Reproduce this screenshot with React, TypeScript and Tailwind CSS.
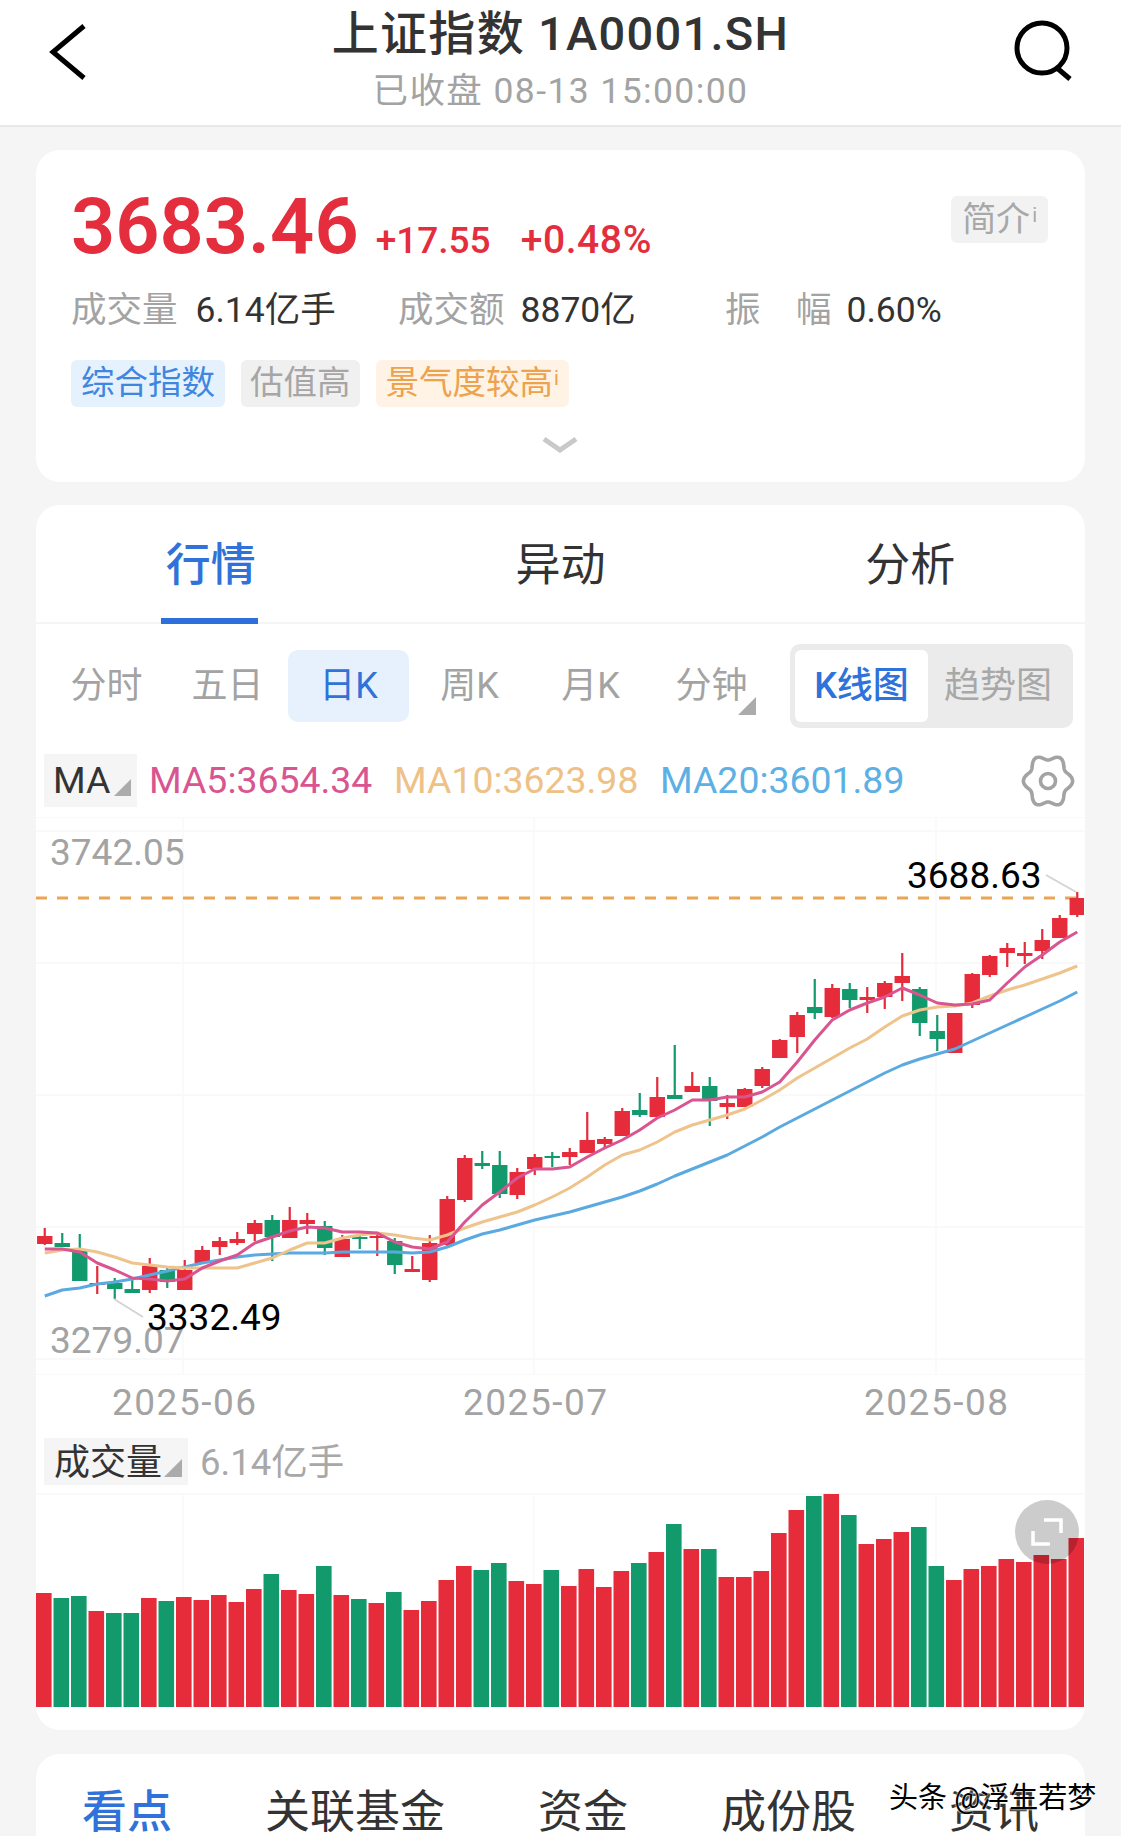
const UP = "#e62b3b";
const DOWN = "#129a6d";

// high, body top, body bottom, low (page px), 1 = red
const candles: [number, number, number, number, number][] = [
  [1228, 1236, 1244, 1245, 1], [1233, 1243, 1247, 1247, 0], [1234, 1250, 1281, 1281, 0], [1266, 1283, 1285, 1294, 1],
  [1278, 1283, 1289, 1299, 0], [1280, 1289, 1293, 1293, 0], [1258, 1266, 1290, 1293, 1], [1268, 1270, 1282, 1288, 0],
  [1260, 1270, 1290, 1290, 1], [1246, 1250, 1263, 1263, 1], [1237, 1241, 1247, 1255, 1], [1232, 1239, 1243, 1245, 1],
  [1220, 1223, 1234, 1241, 1], [1215, 1220, 1237, 1261, 0], [1207, 1220, 1238, 1238, 1], [1213, 1220, 1224, 1234, 1],
  [1221, 1226, 1248, 1255, 0], [1235, 1239, 1257, 1257, 1], [1235, 1237, 1239, 1249, 0], [1233, 1236, 1237, 1256, 1],
  [1238, 1241, 1265, 1274, 0], [1256, 1269, 1272, 1272, 1], [1235, 1243, 1280, 1282, 1], [1196, 1199, 1245, 1247, 1],
  [1155, 1158, 1200, 1202, 1], [1151, 1163, 1166, 1169, 0], [1151, 1165, 1194, 1198, 0], [1168, 1172, 1195, 1199, 1],
  [1154, 1157, 1169, 1175, 1], [1152, 1156, 1158, 1167, 0], [1148, 1152, 1157, 1165, 1], [1112, 1140, 1153, 1153, 1],
  [1137, 1139, 1144, 1148, 1], [1108, 1111, 1136, 1136, 1], [1093, 1110, 1115, 1117, 0], [1077, 1097, 1117, 1117, 1],
  [1045, 1095, 1099, 1099, 0], [1072, 1086, 1092, 1092, 1], [1077, 1086, 1101, 1126, 0], [1095, 1103, 1107, 1119, 1],
  [1088, 1089, 1107, 1107, 1], [1067, 1069, 1086, 1088, 1], [1039, 1040, 1058, 1058, 1], [1012, 1015, 1037, 1053, 1],
  [979, 1007, 1013, 1019, 0], [984, 988, 1017, 1018, 1], [983, 989, 1000, 1008, 0], [987, 997, 1000, 1013, 1],
  [981, 983, 997, 1009, 1], [953, 976, 983, 1001, 1], [987, 989, 1023, 1036, 0], [1015, 1031, 1039, 1051, 0],
  [1013, 1013, 1053, 1053, 1], [973, 974, 1005, 1008, 1], [955, 956, 975, 977, 1], [943, 948, 953, 967, 1],
  [942, 953, 956, 964, 1], [929, 940, 951, 959, 1], [915, 918, 938, 938, 1], [892, 898, 915, 917, 1],
];

const ma5 = [
  1249, 1249, 1252, 1263, 1270, 1278, 1279, 1281, 1279, 1268, 1261, 1255, 1243, 1237, 1231, 1227, 1228, 1232, 1232, 1233,
  1242, 1247, 1249, 1242, 1222, 1205, 1192, 1178, 1169, 1169, 1167, 1157, 1148, 1140, 1130, 1118, 1110, 1100, 1100, 1097,
  1097, 1092, 1082, 1062, 1040, 1020, 1010, 1003, 997, 988, 995, 1003, 1005, 1004, 1000, 983, 967, 955, 942, 932,
];
const ma10 = [
  1253, 1250, 1249, 1252, 1257, 1263, 1265, 1267, 1268, 1268, 1268, 1268, 1263, 1258, 1250, 1243, 1243, 1238, 1235, 1233,
  1235, 1238, 1240, 1235, 1228, 1222, 1217, 1212, 1205, 1197, 1188, 1177, 1165, 1155, 1150, 1142, 1132, 1125, 1120, 1115,
  1109, 1100, 1090, 1078, 1068, 1058, 1048, 1039, 1027, 1016, 1010, 1007, 1006, 1003, 996, 990, 985, 979, 973, 966,
];
const ma20 = [
  1296, 1290, 1288, 1284, 1282, 1279, 1275, 1271, 1267, 1263, 1260, 1257, 1255, 1254, 1253, 1253, 1253, 1252, 1252, 1252,
  1252, 1253, 1252, 1247, 1240, 1234, 1230, 1225, 1220, 1216, 1212, 1207, 1202, 1197, 1191, 1184, 1176, 1169, 1162, 1155,
  1146, 1137, 1127, 1118, 1109, 1100, 1091, 1082, 1073, 1065, 1059, 1054, 1049, 1041, 1033, 1025, 1017, 1009, 1001, 992,
];

// page y of each volume bar's top, 1 = red
const volumes: [number, number][] = [
  [1593, 1], [1598, 0], [1596, 0], [1611, 1], [1613, 0], [1613, 0], [1598, 1], [1601, 0], [1597, 1], [1600, 1],
  [1595, 1], [1602, 1], [1589, 1], [1574, 0], [1590, 1], [1594, 1], [1566, 0], [1595, 1], [1599, 0], [1603, 1],
  [1592, 0], [1610, 1], [1601, 1], [1580, 1], [1566, 1], [1570, 0], [1563, 0], [1581, 1], [1584, 1], [1570, 0],
  [1586, 1], [1569, 1], [1587, 1], [1571, 1], [1563, 0], [1552, 1], [1524, 0], [1549, 1], [1549, 0], [1577, 1],
  [1577, 1], [1571, 1], [1533, 1], [1510, 1], [1496, 0], [1494, 1], [1515, 0], [1544, 1], [1539, 1], [1532, 1],
  [1527, 0], [1566, 0], [1580, 1], [1569, 1], [1566, 1], [1559, 1], [1562, 1], [1555, 1], [1559, 1], [1538, 1],
];

const slotX = (i: number) => 44.75 + 17.5 * i;
const linePoints = (ys: number[]) => ys.map((y, i) => `${slotX(i)},${y}`).join(" ");

const gearPoints = Array.from({ length: 120 }, (_, i) => {
  const a = (i / 120) * Math.PI * 2;
  const r = 22 + 2.6 * Math.cos(6 * a);
  return `${(27 + r * Math.cos(a)).toFixed(2)},${(27 + 1.08 * r * Math.sin(a)).toFixed(2)}`;
}).join(" ");

function Corner({ className }: { className: string }) {
  return (
    <svg viewBox="0 0 18 18" className={className}>
      <polygon points="18,0 18,18 0,18" fill="#ababab" />
    </svg>
  );
}

function Header() {
  return (
    <header className="h-[127px] bg-white border-b-2 border-[#e8e8e8] flex items-start justify-between">
      <div className="w-[110px] pt-[24px] pl-[48px]">
        <svg viewBox="0 0 40 56" className="w-[40px] h-[56px]" fill="none" stroke="#000" strokeWidth="5">
          <path d="M36 2 L5 28 L36 54" />
        </svg>
      </div>
      <div className="flex flex-col items-center">
        <div className="mt-[9px] text-[47px] leading-[50px] font-medium tracking-[1.3px] text-[#333]">上证指数 1A0001.SH</div>
        <div className="mt-[12px] text-[35.5px] leading-[40px] tracking-[1.4px] text-[#a3a3a3]">已收盘 08-13 15:00:00</div>
      </div>
      <div className="w-[110px] pt-[20px] pl-[2px]">
        <svg viewBox="0 0 60 62" className="w-[60px] h-[62px]" fill="none" stroke="#000" strokeWidth="5">
          <circle cx="29" cy="28" r="25" />
          <path d="M44 48 L57 59" />
        </svg>
      </div>
    </header>
  );
}

function QuoteCard() {
  return (
    <section className="mx-[36px] mt-[23px] h-[332px] rounded-[24px] bg-white pl-[35px] pr-[37px] pt-[46px] flex flex-col">
      <div className="flex justify-between items-start h-[60px]">
        <div className="flex items-baseline font-medium text-[#e42d3d]">
          <span className="text-[77.5px] leading-[62px] font-semibold">3683.46</span>
          <span className="ml-[17px] text-[37px] leading-[40px]">+17.55</span>
          <span className="ml-[30px] text-[39px] leading-[40px] tracking-[0.6px]">+0.48%</span>
        </div>
        <span className="h-[47px] px-[11px] rounded-[6px] bg-[#f2f2f2] text-[34px] leading-[47px] text-[#a8a8a8]">
          简介<sup className="text-[20px] -top-[9px] ml-[2px]">i</sup>
        </span>
      </div>
      <div className="mt-[32px] grid grid-cols-[327px_327px_auto] text-[35.5px] leading-[44px] text-[#a3a3a3]">
        <div className="flex gap-[18px]">
          <span>成交量</span>
          <span className="text-[#333]">6.14亿手</span>
        </div>
        <div className="flex gap-[16px]">
          <span>成交额</span>
          <span className="text-[#333]">8870亿</span>
        </div>
        <div className="flex">
          <span className="w-[71px]">振</span>
          <span>幅</span>
          <span className="ml-[15px] text-[#333]">0.60%</span>
        </div>
      </div>
      <div className="mt-[28px] flex gap-[16px] text-[33.5px] leading-[46px]">
        <span className="h-[47px] px-[10px] rounded-[6px] bg-[#e5f1fd] text-[#3f86e0]">综合指数</span>
        <span className="h-[47px] px-[9px] rounded-[6px] bg-[#f0f0f0] text-[#a6a6a6]">估值高</span>
        <span className="h-[47px] px-[10px] rounded-[6px] bg-[#fff3e6] text-[#eda24e]">
          景气度较高<sup className="text-[20px] -top-[9px] ml-[1px]">i</sup>
        </span>
      </div>
      <div className="mt-[29px] flex justify-center">
        <svg viewBox="0 0 36 17" className="w-[36px] h-[17px]" fill="none" stroke="#c9c9c9" strokeWidth="5">
          <path d="M2 3 L18 14 L34 3" />
        </svg>
      </div>
    </section>
  );
}

function KLineChart() {
  return (
    <div className="relative h-[558px] mt-[10px] overflow-hidden">
      <svg viewBox="36 817 1048 558" className="w-[1048px] h-[558px]">
        {[817, 831, 963, 1095, 1227, 1359, 1375].map((y) => (
          <line key={y} x1="36" x2="1084" y1={y} y2={y} stroke="#f7f7f7" strokeWidth="1.5" />
        ))}
        {[183, 534, 936].map((x) => (
          <line key={x} x1={x} x2={x} y1="817" y2="1375" stroke="#f9f9f9" strokeWidth="1.5" />
        ))}
        <line x1="36" x2="1084" y1="898" y2="898" stroke="#e9a552" strokeWidth="3" strokeDasharray="11 10" />
        {candles.map(([high, top, bottom, low, up], i) => {
          const color = up ? UP : DOWN;
          return (
            <g key={i} fill={color}>
              <rect x={slotX(i) - 1.1} y={high} width="2.2" height={low - high} />
              <rect x={slotX(i) - 7.7} y={top} width="15.4" height={Math.max(bottom - top, 2)} />
            </g>
          );
        })}
        <polyline points={linePoints(ma20)} fill="none" stroke="#5ba9e1" strokeWidth="3" strokeLinejoin="round" />
        <polyline points={linePoints(ma10)} fill="none" stroke="#eec48c" strokeWidth="3" strokeLinejoin="round" />
        <polyline points={linePoints(ma5)} fill="none" stroke="#d95590" strokeWidth="3" strokeLinejoin="round" />
        <line x1="114" y1="1299" x2="143" y2="1317" stroke="#d4d4d4" strokeWidth="2" />
        <line x1="1046" y1="875" x2="1076" y2="892" stroke="#d4d4d4" strokeWidth="2" />
      </svg>
      <span className="absolute left-[14px] top-[18px] text-[37px] leading-[36px] text-[#a3a3a3]">3742.05</span>
      <span className="absolute left-[14px] top-[506px] text-[37px] leading-[36px] text-[#a3a3a3]">3279.07</span>
      <span className="absolute left-[111px] top-[483px] text-[37px] leading-[36px] text-black">3332.49</span>
      <span className="absolute left-[871px] top-[41px] text-[37px] leading-[36px] text-black">3688.63</span>
    </div>
  );
}

function VolumeChart() {
  return (
    <div className="relative mt-[8px] h-[214px]">
      <svg viewBox="36 1493 1048 214" className="w-[1048px] h-[214px]">
        <line x1="36" x2="1084" y1="1494" y2="1494" stroke="#f7f7f7" strokeWidth="1.5" />
        {[183, 534, 936].map((x) => (
          <line key={x} x1={x} x2={x} y1="1493" y2="1707" stroke="#f9f9f9" strokeWidth="1.5" />
        ))}
        {volumes.map(([top, up], i) => (
          <rect key={i} x={36 + 17.5 * i} y={top} width="15.6" height={1707 - top} fill={up ? UP : DOWN} />
        ))}
      </svg>
      <div className="absolute left-[979px] top-[7px] w-[64px] h-[64px] rounded-full bg-black/20 flex items-center justify-center">
        <svg viewBox="0 0 32 28" className="w-[32px] h-[28px]" fill="none" stroke="#fff" strokeWidth="3.5">
          <path d="M13 2 H30 V15" />
          <path d="M2 13 V26 H19" />
        </svg>
      </div>
    </div>
  );
}

function MarketCard() {
  const intervals = ["分时", "五日", "日K", "周K", "月K", "分钟"];
  return (
    <section className="mx-[36px] mt-[23px] h-[1225px] rounded-[24px] bg-white">
      <div className="grid grid-cols-3 h-[119px] border-b-2 border-[#f5f5f5] text-[45px] leading-[50px] text-[#333]">
        <div className="relative flex justify-center pt-[36px] text-[#2f72d9] font-medium">
          行情
          <span className="absolute left-[125px] -bottom-[2px] w-[97px] h-[6px] bg-[#2d6fdb]" />
        </div>
        <div className="flex justify-center pt-[36px]">异动</div>
        <div className="flex justify-center pt-[36px]">分析</div>
      </div>
      <div className="mt-[20px] pl-[10px] pr-[12px] h-[84px] flex items-center justify-between">
        <div className="flex text-[36px] text-[#a3a3a3]">
          {intervals.map((label) => (
            <div
              key={label}
              className={`relative w-[121px] h-[72px] flex items-center justify-center rounded-[10px] ${
                label === "日K" ? "bg-[#e6f1fd] text-[#2f72d9]" : ""
              }`}
            >
              {label}
              {label === "分钟" && <Corner className="absolute left-[87px] top-[47px] w-[18px] h-[18px]" />}
            </div>
          ))}
        </div>
        <div className="w-[283px] h-[84px] rounded-[10px] bg-[#ebebeb] flex items-center pl-[5px] text-[36px]">
          <div className="w-[133px] h-[72px] rounded-[6px] bg-white flex items-center justify-center font-medium text-[#2f72d9]">K线图</div>
          <div className="w-[140px] flex justify-center text-[#a8a8a8]">趋势图</div>
        </div>
      </div>
      <div className="mt-[26px] pl-[8px] pr-[10px] h-[53px] flex items-center text-[37.4px]">
        <div className="w-[93px] h-[53px] bg-[#f5f5f5] pl-[9px] relative flex items-center text-[#333]">
          MA
          <Corner className="absolute left-[70px] top-[25px] w-[17px] h-[17px]" />
        </div>
        <span className="ml-[12px] w-[245px] text-[#d9558f]">MA5:3654.34</span>
        <span className="w-[266px] text-[#eec186]">MA10:3623.98</span>
        <span className="text-[#5cb0e4]">MA20:3601.89</span>
        <svg viewBox="0 0 54 54" className="ml-auto w-[54px] h-[54px]" fill="none" stroke="#a3a3a3" strokeWidth="3.6">
          <polygon points={gearPoints} strokeLinejoin="round" />
          <circle cx="27" cy="27" r="7.5" />
        </svg>
      </div>
      <KLineChart />
      <div className="relative h-[55px] text-[37px] leading-[55px] tracking-[1.5px] text-[#a3a3a3]">
        <span className="absolute left-[76px]">2025-06</span>
        <span className="absolute left-[427px]">2025-07</span>
        <span className="absolute left-[828px]">2025-08</span>
      </div>
      <div className="mt-[8px] ml-[8px] h-[47px] flex items-center">
        <div className="relative w-[144px] h-[47px] bg-[#f5f5f5] pl-[10px] pt-[3px] flex items-center text-[36px] text-[#333]">
          成交量
          <Corner className="absolute left-[120px] top-[21px] w-[18px] h-[18px]" />
        </div>
        <span className="ml-[12px] pt-[3px] text-[36.5px] text-[#a8a8a8]">6.14亿手</span>
      </div>
      <VolumeChart />
    </section>
  );
}

function NewsCard() {
  const tabs = ["看点", "关联基金", "资金", "成份股", "资讯"];
  return (
    <section className="mx-[36px] mt-[24px] h-[200px] rounded-t-[24px] bg-white px-[46px] pt-[34px] flex justify-between text-[45px] leading-[50px] text-[#333]">
      {tabs.map((tab) => (
        <span key={tab} className={tab === "看点" ? "text-[#2f72d9] font-medium" : ""}>
          {tab}
        </span>
      ))}
    </section>
  );
}

export default function App() {
  return (
    <div className="relative w-[1121px] h-[1836px] overflow-hidden bg-[#f5f5f5] font-['Roboto','Noto_Sans_CJK_SC',sans-serif]">
      <Header />
      <QuoteCard />
      <MarketCard />
      <NewsCard />
      <span className="absolute left-[889px] top-[1780px] text-[29px] leading-[36px] text-black [text-shadow:0_0_2px_#fff,0_0_2px_#fff]">
        头条 @浮生若梦
      </span>
    </div>
  );
}
